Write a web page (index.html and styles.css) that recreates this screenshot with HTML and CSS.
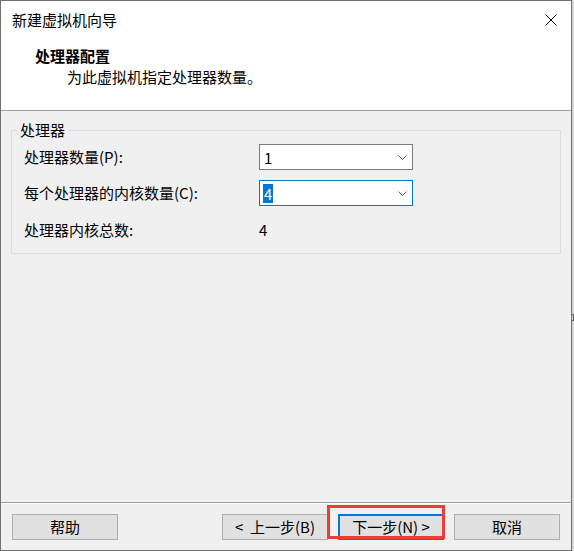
FILE: index.html
```html
<!DOCTYPE html>
<html lang="zh-CN">
<head>
<meta charset="utf-8">
<title>新建虚拟机向导</title>
<link rel="stylesheet" href="styles.css">
</head>
<body>
<div class="screen">
  <div class="window">
    <div class="header">
      <div class="titlebar">
        <span class="title">新建虚拟机向导</span>
        <svg class="close" width="12" height="12" viewBox="0 0 12 12" aria-label="关闭"><path d="M0.5 0.5L11.5 11.5M11.5 0.5L0.5 11.5" stroke="#000" stroke-width="1" fill="none"/></svg>
      </div>
      <div class="heading">处理器配置</div>
      <div class="subtitle">为此虚拟机指定处理器数量。</div>
    </div>
    <div class="content">
      <fieldset class="group">
        <legend>处理器</legend>
        <div class="rows">
          <span class="lbl">处理器数量(P):</span>
          <div class="combo">
            <span class="val">1</span>
            <svg class="chev" width="9" height="5" viewBox="0 0 9 5"><polyline points="0.5,0.5 4.5,4.5 8.5,0.5" fill="none" stroke="#5a5a5a" stroke-width="1"/></svg>
          </div>
          <span class="lbl">每个处理器的内核数量(C):</span>
          <div class="combo focused">
            <span class="val selected">4</span>
            <svg class="chev" width="9" height="5" viewBox="0 0 9 5"><polyline points="0.5,0.5 4.5,4.5 8.5,0.5" fill="none" stroke="#5a5a5a" stroke-width="1"/></svg>
          </div>
          <span class="lbl total">处理器内核总数:</span>
          <span class="total-val total">4</span>
        </div>
      </fieldset>
    </div>
    <div class="footer">
      <button class="btn">帮助</button>
      <button class="btn back">&lt;&nbsp; 上一步(B)</button>
      <button class="btn default">下一步(N) &gt;</button>
      <button class="btn">取消</button>
    </div>
    <div class="annot"></div>
  </div>
  <span class="edge-mark"></span>
</div>
</body>
</html>
```

FILE: styles.css
```css
html, body {
  margin: 0;
  padding: 0;
}
body {
  background: #d6d6d6;
  font-family: "Noto Sans CJK SC", "Noto Sans", "Liberation Sans", sans-serif;
  font-size: 15px;
  color: #000;
}
.screen {
  position: relative;
  width: 574px;
  height: 551px;
}
.window {
  position: relative;
  box-sizing: border-box;
  width: 572px;
  height: 551px;
  border: 1px solid #707070;
  background: #f0f0f0;
  display: flex;
  flex-direction: column;
}
.header {
  background: #fff;
  height: 109px;
  border-bottom: 1px solid #a0a0a0;
  flex: none;
}
.titlebar {
  height: 38px;
  display: flex;
  align-items: center;
  justify-content: space-between;
  padding: 0 14px 0 11px;
}
.title {
  line-height: 20px;
}
.close {
  display: block;
}
.heading {
  margin-top: 7px;
  padding-left: 34px;
  line-height: 20px;
  font-weight: 700;
}
.subtitle {
  margin-top: 1px;
  padding-left: 66px;
  line-height: 20px;
}
.content {
  flex: 1;
  min-height: 0;
}
.group {
  margin: 9px 10px 0 10px;
  padding: 4px 0 13px 5px;
  border: 1px solid #dcdcdc;
  min-width: 0;
}
.group legend {
  padding: 0 3px;
  line-height: 20px;
}
.rows {
  margin-left: 7px;
  display: grid;
  grid-template-columns: 235px 154px;
  row-gap: 10px;
  align-items: center;
}
.lbl {
  line-height: 20px;
}
.combo {
  box-sizing: border-box;
  height: 26px;
  border: 1px solid #7a7a7a;
  background: #fff;
  display: flex;
  align-items: center;
  justify-content: space-between;
  padding: 0 5px 0 3px;
}
.combo.focused {
  border-color: #0078d7;
}
.val {
  display: inline-block;
  padding: 0 1px;
  line-height: 19px;
}
.val.selected {
  background: #0078d7;
  color: #fff;
}
.chev {
  display: block;
}
.total {
  padding-top: 4px;
  line-height: 20px;
}
.footer {
  flex: none;
  height: 48px;
  box-sizing: border-box;
  border-top: 1px solid #a0a0a0;
  box-shadow: inset 0 1px 0 #fff;
  padding: 11px 11px 10px 11px;
  display: flex;
  gap: 10px;
}
.btn {
  box-sizing: border-box;
  width: 106px;
  height: 26px;
  margin: 0;
  padding: 0;
  background: #e1e1e1;
  border: 1px solid #adadad;
  font-family: inherit;
  font-size: 15px;
  line-height: 22px;
  color: #000;
}
.btn.back {
  margin-left: auto;
}
.btn.default {
  border: 2px solid #0078d7;
}
.annot {
  position: absolute;
  left: 326px;
  top: 504px;
  width: 118px;
  height: 34px;
  box-sizing: border-box;
  border: 3px solid #f03b3b;
}
.edge-mark {
  position: absolute;
  left: 572px;
  top: 314px;
  width: 1px;
  height: 5px;
  border: 1px solid #5a5a5a;
  border-left: none;
}
```
